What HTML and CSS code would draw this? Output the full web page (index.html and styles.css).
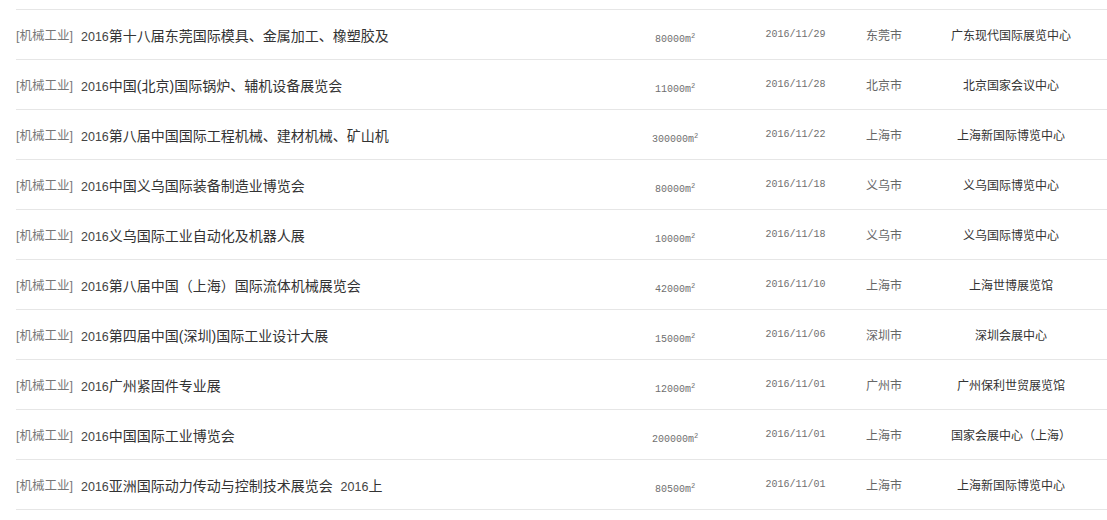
FILE: index.html
```html
<!DOCTYPE html>
<html lang="zh-CN">
<head>
<meta charset="utf-8">
<title>展会列表</title>
<link rel="stylesheet" href="styles.css">
</head>
<body>
<ul class="expo-list">
  <li class="row"><span class="cat">[机械工业]</span><a class="title" href="#"><span class="num">2016</span>第十八届东莞国际模具、金属加工、橡塑胶及</a><span class="area">80000m<sup>2</sup></span><span class="date">2016/11/29</span><span class="city">东莞市</span><span class="venue">广东现代国际展览中心</span></li>
  <li class="row"><span class="cat">[机械工业]</span><a class="title" href="#"><span class="num">2016</span>中国(北京)国际锅炉、辅机设备展览会</a><span class="area">11000m<sup>2</sup></span><span class="date">2016/11/28</span><span class="city">北京市</span><span class="venue">北京国家会议中心</span></li>
  <li class="row"><span class="cat">[机械工业]</span><a class="title" href="#"><span class="num">2016</span>第八届中国国际工程机械、建材机械、矿山机</a><span class="area">300000m<sup>2</sup></span><span class="date">2016/11/22</span><span class="city">上海市</span><span class="venue">上海新国际博览中心</span></li>
  <li class="row"><span class="cat">[机械工业]</span><a class="title" href="#"><span class="num">2016</span>中国义乌国际装备制造业博览会</a><span class="area">80000m<sup>2</sup></span><span class="date">2016/11/18</span><span class="city">义乌市</span><span class="venue">义乌国际博览中心</span></li>
  <li class="row"><span class="cat">[机械工业]</span><a class="title" href="#"><span class="num">2016</span>义乌国际工业自动化及机器人展</a><span class="area">10000m<sup>2</sup></span><span class="date">2016/11/18</span><span class="city">义乌市</span><span class="venue">义乌国际博览中心</span></li>
  <li class="row"><span class="cat">[机械工业]</span><a class="title" href="#"><span class="num">2016</span>第八届中国（上海）国际流体机械展览会</a><span class="area">42000m<sup>2</sup></span><span class="date">2016/11/10</span><span class="city">上海市</span><span class="venue">上海世博展览馆</span></li>
  <li class="row"><span class="cat">[机械工业]</span><a class="title" href="#"><span class="num">2016</span>第四届中国(深圳)国际工业设计大展</a><span class="area">15000m<sup>2</sup></span><span class="date">2016/11/06</span><span class="city">深圳市</span><span class="venue">深圳会展中心</span></li>
  <li class="row"><span class="cat">[机械工业]</span><a class="title" href="#"><span class="num">2016</span>广州紧固件专业展</a><span class="area">12000m<sup>2</sup></span><span class="date">2016/11/01</span><span class="city">广州市</span><span class="venue">广州保利世贸展览馆</span></li>
  <li class="row"><span class="cat">[机械工业]</span><a class="title" href="#"><span class="num">2016</span>中国国际工业博览会</a><span class="area">200000m<sup>2</sup></span><span class="date">2016/11/01</span><span class="city">上海市</span><span class="venue">国家会展中心（上海）</span></li>
  <li class="row"><span class="cat">[机械工业]</span><a class="title" href="#"><span class="num">2016</span>亚洲国际动力传动与控制技术展览会&nbsp; <span class="num">2016</span>上</a><span class="area">80500m<sup>2</sup></span><span class="date">2016/11/01</span><span class="city">上海市</span><span class="venue">上海新国际博览中心</span></li>
</ul>
</body>
</html>
```

FILE: styles.css
```css
html, body {
  margin: 0;
  padding: 0;
  background: #ffffff;
}

body {
  font-family: "Liberation Sans", "Noto Sans CJK SC", sans-serif;
  color: #333;
}

.expo-list {
  list-style: none;
  margin: 9px 0 0 16px;
  padding: 0;
  border-top: 1px solid #e6e6e6;
}

.row {
  display: flex;
  align-items: center;
  height: 49px;
  border-bottom: 1px solid #e6e6e6;
  white-space: nowrap;
}

.cat {
  width: 65px;
  flex: none;
  font-size: 12.5px;
  color: #777;
}

.title {
  width: 534px;
  flex: none;
  font-size: 14px;
  color: #333;
  text-decoration: none;
}

.num {
  font-size: 12.5px;
  color: #444;
}

.area {
  width: 120px;
  flex: none;
  text-align: center;
  font-family: "Liberation Mono", "Noto Sans CJK SC", monospace;
  font-size: 10px;
  color: #707070;
  position: relative;
  top: 4px;
}

.area sup {
  font-size: 7px;
  vertical-align: 4px;
}

.date {
  width: 121px;
  flex: none;
  text-align: center;
  font-family: "Liberation Mono", monospace;
  font-size: 10px;
  color: #707070;
}

.city {
  width: 49px;
  flex: none;
  padding-left: 10px;
  font-size: 12px;
  color: #666;
}

.venue {
  width: 192px;
  flex: none;
  text-align: center;
  font-size: 12px;
  color: #333;
}
```
